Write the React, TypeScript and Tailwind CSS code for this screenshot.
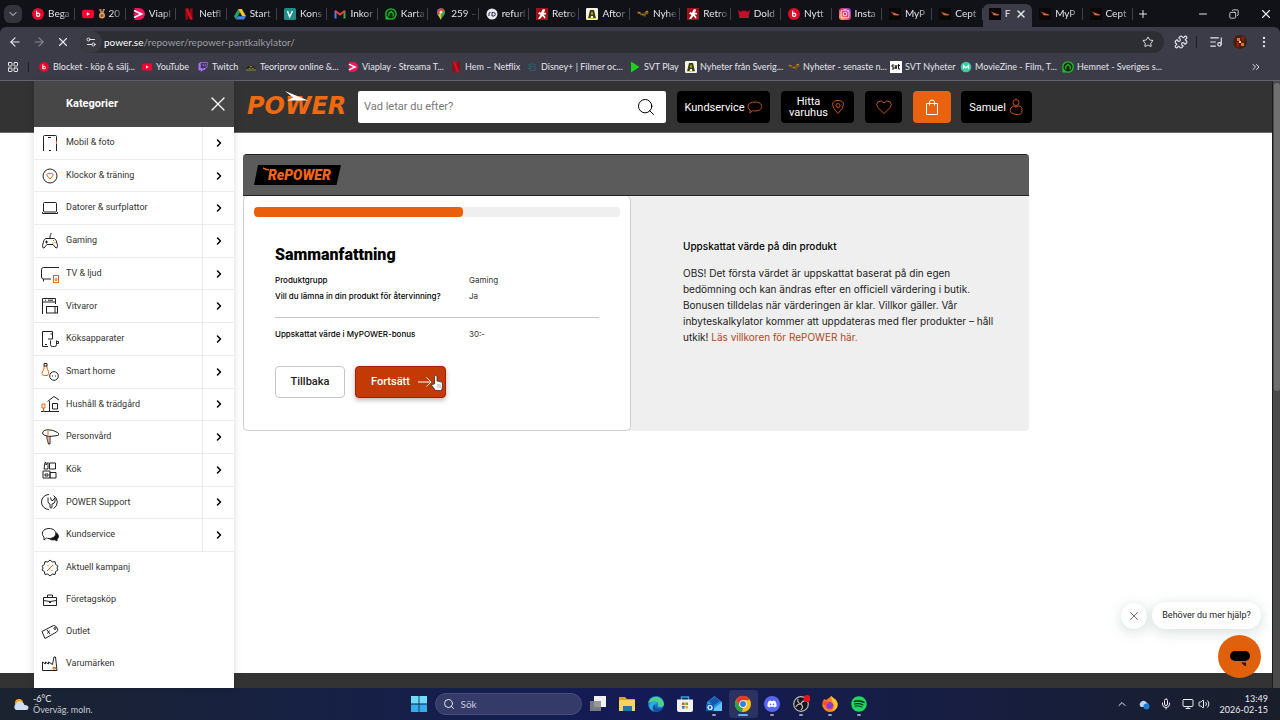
import React from 'react';
import {
  ArrowLeft, ArrowRight, ChevronDown, ChevronRight, ChevronUp, ChevronsRight, Copy, EllipsisVertical,
  ListMusic, Mic, Minus, Monitor, Plus, Puzzle, Search, Settings2, Star, Volume2, X, LayoutGrid,
} from 'lucide-react';
import { FaDiscord, FaInstagram, FaSpotify, FaTwitch } from 'react-icons/fa';

type IconProps = { className?: string };

const Blocket = ({ className = 'size-3' }: IconProps) => (
  <svg viewBox="0 0 12 12" className={className}>
    <circle cx="6" cy="6" r="6" fill="#e30b2c" />
    <path d="M4.6 2.8v5.6M4.6 6.8a1.6 1.6 0 1 0 3.2 0a1.6 1.6 0 1 0-3.2 0" fill="none" stroke="#fff" strokeWidth="1.2" />
  </svg>
);

const Youtube = ({ className = 'size-3' }: IconProps) => (
  <svg viewBox="0 0 12 12" className={className}>
    <rect y="1.8" width="12" height="8.4" rx="2.2" fill="#f00630" />
    <path d="M4.8 4.2v3.6L8 6z" fill="#fff" />
  </svg>
);

const Viaplay = ({ className = 'size-3' }: IconProps) => (
  <svg viewBox="0 0 12 12" className={className}>
    <path d="M1 0h5a6 6 0 0 1 0 12H1l2-3L0 6l3-3z" fill="#f0145a" />
    <path d="M1 2.5 8.5 6 1 9.5" fill="none" stroke="#fff" strokeWidth="1.8" />
  </svg>
);

const Netflix = ({ className = 'size-3' }: IconProps) => (
  <svg viewBox="0 0 12 12" className={className}>
    <path d="M2.5 0.5h2.6v11H2.5zM7 0.5h2.6v11H7z" fill="#9b0610" />
    <path d="M2.5 0.5h2.6l4.5 11H7z" fill="#d80f1c" />
  </svg>
);

const Drive = ({ className = 'size-3' }: IconProps) => (
  <svg viewBox="0 0 12 12" className={className}>
    <path d="M4.2 1 0 8.2l2 3.3L6.1 4.3z" fill="#1fa463" />
    <path d="M4.2 1h3.7L12 8.2H8.2z" fill="#fbc02d" />
    <path d="M4 8.2h8l-2 3.3H2z" fill="#4285f4" />
  </svg>
);

const Konsument = ({ className = 'size-3' }: IconProps) => (
  <svg viewBox="0 0 12 12" className={className}>
    <rect width="12" height="12" rx="1.5" fill="#1d8f86" />
    <path d="M3.5 3 5.6 9l2.9-6" fill="none" stroke="#fff" strokeWidth="1.4" />
  </svg>
);

const Gmail = ({ className = 'size-3' }: IconProps) => (
  <svg viewBox="0 0 12 12" className={className}>
    <path d="M1.5 10.5V3" stroke="#4285f4" strokeWidth="2" />
    <path d="M10.5 10.5V3" stroke="#34a853" strokeWidth="2" />
    <path d="M1 2.8 6 6.6l5-3.8" fill="none" stroke="#ea4335" strokeWidth="2" />
  </svg>
);

const Hemnet = ({ className = 'size-3' }: IconProps) => (
  <svg viewBox="0 0 12 12" className={className}>
    <circle cx="6" cy="6" r="5.2" fill="#0a2b0d" stroke="#22c12c" strokeWidth="1.3" />
    <path d="M3.8 8.5V5.3L6 3.5l2.2 1.8v3.2" fill="none" stroke="#22c12c" strokeWidth="1.2" />
    <path d="M0.5 8v3.5h3.5" fill="#22c12c" />
  </svg>
);

const MapPinLogo = () => (
  <svg viewBox="0 0 12 12" className="size-3">
    <path d="M6 12C5.5 9 2 7.5 2 4.2A4 4 0 0 1 6 .3z" fill="#4285f4" />
    <path d="M6 12c.5-3 4-4.5 4-7.8A4 4 0 0 0 6 .3z" fill="#34a853" />
    <path d="M2.8 6.8 9.5 2.5 8 .8 6 .3 2.5 2z" fill="#ea4335" />
    <path d="M3 7 6 4.5V12z" fill="#fbbc04" />
    <circle cx="6" cy="4.2" r="1.4" fill="#fff" />
  </svg>
);

const Refurbed = () => (
  <svg viewBox="0 0 12 12" className="size-3">
    <circle cx="6" cy="6" r="5.5" fill="#e9e9f0" />
    <path d="M3 8V5.5Q3 4.3 4.5 4.5M6 8V4.5h1.5a1.7 1.7 0 0 1 0 3.5z" fill="none" stroke="#22243a" strokeWidth="1" />
  </svg>
);

const Retro = () => (
  <svg viewBox="0 0 12 12" className="size-3">
    <rect width="12" height="12" fill="#a50e1b" />
    <path d="M6.5 1.5 8.5 1l.5 2L7.5 4.5 10 5v1.5H7.5L9.5 9 9 11 6.5 8 4 11H2l2.5-4L2 5.5 3.5 4l1.5.8z" fill="#fff" />
  </svg>
);

const Aftonbladet = ({ className = 'size-3' }: IconProps) => (
  <svg viewBox="0 0 12 12" className={className}>
    <rect width="12" height="12" rx="1.2" fill="#f4f4e8" />
    <path d="M2 10.5 4 2h4l2 8.5H7.3L7 8H5l-.5 2.5z" fill="#3c3d0d" />
    <path d="M5 6.5 6 3l1 3.5zM2 10h8v1H2z" fill="#d5d92a" />
  </svg>
);

const Expressen = ({ className = 'size-3' }: IconProps) => (
  <svg viewBox="0 0 12 12" className={className}>
    <path d="M0 4.5 1.5 3l1 1.5L4 4l.5 2 2-1L7 7l1-4 1 1 2-2v2l1-.5-1 2.5-2 .5-1 3-1-2-1 .5L5 7l-1.5.5L3 6 1 6z" fill="#7c5a1c" />
    <path d="M2 4.5h1M9 3.5h1.5M5.5 6.5h1" stroke="#e09a28" strokeWidth="1" />
  </svg>
);

const Crown = () => (
  <svg viewBox="0 0 12 12" className="size-3">
    <path d="M0.3 2 3 4l1.5-2L6 3.5 7.5 2 9 4l2.7-2-1 8H1.3z" fill="#c40d2b" />
  </svg>
);

const PowerIcon = () => (
  <svg viewBox="0 0 12 12" className="size-3">
    <rect width="12" height="12" fill="#0b0707" />
    <path d="M1.5 3.5 5.5 5l5 1.7-1 .8-4.5-.2-1.5-.8 1-.2z" fill="#d9683c" />
  </svg>
);

const InstagramIcon = () => (
  <span className="flex size-3 items-center justify-center rounded-[3px] bg-linear-to-tr from-[#fbad3c] via-[#e1306c] to-[#8134c8] text-white">
    <FaInstagram className="size-2.5" />
  </span>
);

const Medal = () => (
  <svg viewBox="0 0 8 10" className="h-2.5 w-2 shrink-0">
    <path d="M1 0h2l1 3 1-3h2L5.5 4h-3z" fill="#b98b62" />
    <circle cx="4" cy="6.5" r="3" fill="#e0a060" />
    <circle cx="4" cy="6.5" r="1.5" fill="#8d5a2c" />
  </svg>
);

const tabs: { icon: React.ReactNode; label: string; medal?: boolean; active?: boolean }[] = [
  { icon: <Blocket />, label: 'Bega' },
  { icon: <Youtube />, label: '20', medal: true },
  { icon: <Viaplay />, label: 'Viapl' },
  { icon: <Netflix />, label: 'Netfl' },
  { icon: <Drive />, label: 'Start' },
  { icon: <Konsument />, label: 'Kons' },
  { icon: <Gmail />, label: 'Inkor' },
  { icon: <Hemnet />, label: 'Karta' },
  { icon: <MapPinLogo />, label: '259 –' },
  { icon: <Refurbed />, label: 'refurl' },
  { icon: <Retro />, label: 'Retro' },
  { icon: <Aftonbladet />, label: 'Aftor' },
  { icon: <Expressen />, label: 'Nyhe' },
  { icon: <Retro />, label: 'Retro' },
  { icon: <Crown />, label: 'Dold' },
  { icon: <Blocket />, label: 'Nytt' },
  { icon: <InstagramIcon />, label: 'Insta' },
  { icon: <PowerIcon />, label: 'MyP' },
  { icon: <PowerIcon />, label: 'Cept' },
  { icon: <PowerIcon />, label: 'F', active: true },
  { icon: <PowerIcon />, label: 'MyP' },
  { icon: <PowerIcon />, label: 'Cept' },
];

const bookmarks = [
  { icon: <Blocket className="size-2.5" />, label: 'Blocket - köp & sälj...', width: 'w-[103px]' },
  { icon: <Youtube className="size-2.5" />, label: 'YouTube', width: 'w-[56px]' },
  { icon: <FaTwitch className="size-2.5 text-[#a970ff]" />, label: 'Twitch', width: 'w-[48px]' },
  {
    icon: (
      <svg viewBox="0 0 12 12" className="size-3">
        <path d="M1 8.5Q1.5 4.5 6 4.5T11 8.5z" fill="#2f3216" />
        <path d="M1 9h10M4 7.5h1.5M7 7.5h1.5M5 5.5h2" stroke="#8c8e2c" />
      </svg>
    ),
    label: 'Teoriprov online &...',
    width: 'w-[102px]',
  },
  { icon: <Viaplay className="size-2.5" />, label: 'Viaplay - Streama T...', width: 'w-[103px]' },
  { icon: <Netflix className="size-3" />, label: 'Hem – Netflix', width: 'w-[76px]' },
  {
    icon: (
      <svg viewBox="0 0 12 12" className="size-3">
        <path d="M2 4.5q4-3.5 8 0M4 4.5v5h3.5a2 2 0 0 0 0-4H3M2 7.5h4" fill="none" stroke="#2c5a68" strokeWidth="1.2" />
      </svg>
    ),
    label: 'Disney+ | Filmer oc...',
    width: 'w-[103px]',
  },
  {
    icon: (
      <svg viewBox="0 0 12 12" className="size-3">
        <path d="M2 0.5 10.5 6 2 11.5z" fill="#1fd11f" />
      </svg>
    ),
    label: 'SVT Play',
    width: 'w-[56px]',
  },
  { icon: <Aftonbladet className="size-3" />, label: 'Nyheter från Sverig...', width: 'w-[103px]' },
  { icon: <Expressen className="size-3" />, label: 'Nyheter - senaste n...', width: 'w-[102px]' },
  {
    icon: (
      <svg viewBox="0 0 12 12" className="size-3">
        <rect width="12" height="12" fill="#fff" />
        <path d="M4 4H2v2h2v2H2M5 4l1 4 1-4M8.5 3v5H10M8 4.5h2" fill="none" stroke="#111" />
      </svg>
    ),
    label: 'SVT Nyheter',
    width: 'w-[70px]',
  },
  {
    icon: (
      <svg viewBox="0 0 12 12" className="size-3">
        <circle cx="6" cy="6" r="5.3" fill="#3ecba0" />
        <path d="M3.5 8V4.5L6 7l2.5-2.5V8" fill="none" stroke="#e8fff8" strokeWidth="1.2" />
      </svg>
    ),
    label: 'MovieZine - Film, T...',
    width: 'w-[102px]',
  },
  { icon: <Hemnet className="size-3" />, label: 'Hemnet - Sveriges s...', width: 'w-[103px]' },
];

const orange = '#e8620f';

// Sidebar pictograms share one 18 x 18 grid and a thin black stroke.
const categories: { label: string; art: React.ReactNode }[] = [
  {
    label: 'Mobil & foto',
    art: <><path d="M2.5 17V2.5q0-1 1-1h11q1 0 1 1V17" /><path d="M7 3.5h3M8 16.5h2" /><path d="M15.5 7v3" stroke={orange} /></>,
  },
  {
    label: 'Klockor & träning',
    art: <><circle cx="9" cy="9" r="7" /><path d="M9 12 6.3 9a1.6 1.6 0 0 1 2.7-2 1.6 1.6 0 0 1 2.7 2z" stroke={orange} /></>,
  },
  {
    label: 'Datorer & surfplattor',
    art: <><rect x="2.5" y="3.5" width="13" height="9.5" rx="1" /><path d="M1.5 13v1.5h15V13" /></>,
  },
  {
    label: 'Gaming',
    art: <><path d="M4.5 6.5q-2 1-3 7 0 3 1.5 2.5l3-3.500h6l3 3.500q1.500.5 1.500-2.500-1-6-3-7zM9 6.500V4q0-1 1-1.500V1" /><path d="M5.500 8.500v3M4 10h3" /><path d="M12 8.500h1M13.500 10.500h1M11.500 11h1" stroke={orange} /></>,
  },
  {
    label: 'TV & ljud',
    art: <><path d="M18 2.500H2.500q-2 0-2 2v7.500q0 2 2 2H10M2.500 14v2.500" /><rect x="12.500" y="10.500" width="5" height="7" stroke={orange} /><circle cx="15" cy="14.500" r="1" stroke={orange} /></>,
  },
  {
    label: 'Vitvaror',
    art: <><path d="M1.500 17V1.500h13V7M1.500 5h13M4 3.200h1M7 3.200h5" /><rect x="5.500" y="9.500" width="11" height="6.500" /><path d="M14 9.500V16" /></>,
  },
  {
    label: 'Köksapparater',
    art: <><path d="M7 16.500H1.500V1.500h10V9H7M9.500 4H12" /><path d="M9.500 10.500v4q0 2 2 2h2q2 0 2-2v-4M15.500 11.500h2v2h-2M4 14.500h2" /></>,
  },
  {
    label: 'Smart home',
    art: <><path d="M3 3v2q0 1.500-1.500 3.500t1 4h4q2-2 1-4T6 5V3" stroke={orange} /><path d="M3 .5h3V3H3z" /><circle cx="13" cy="13" r="4.300" /><path d="M11 13h1M14 13h1" /></>,
  },
  {
    label: 'Hushåll & trädgård',
    art: <><path d="M0 16.500h18M6.500 6.500 13 1.500l5 3.500M8.500 6v10.500M11.500 8.500h5v5.500h-5z" /><path d="M1 9h3v4H1zM2.500 13v3.500" stroke={orange} /></>,
  },
  {
    label: 'Personvård',
    art: <><path d="M1.500 5Q2 2 7 1.800T16.500 4.500 13 8q-5 1-9-.5Q1.500 6.500 1.500 5z" /><path d="M6 8v2.500l1.500 5.500H9V8" /><path d="M7 3v4M7 8.500V14" stroke={orange} /></>,
  },
  {
    label: 'Kök',
    art: <path d="M3 8 4 1.500h1V4l2-2.500V8zM8.500 2h6v6h-6zM2 10h7v7H2zM9 11.500h6V17H9zM4 13h3v2H4z" />,
  },
  {
    label: 'POWER Support',
    art: <><path d="M8 1.500a7.500 7.500 0 0 0 0 15M12.500 2.500a7.500 7.500 0 0 1 0 13" /><path d="M7 4.500v4q0 2 2 2.500v3.500q1 1.500 2 0V11q3-.5 3-3V4.500l-2 3h-1.500l-1-3" /></>,
  },
  {
    label: 'Kundservice',
    art: <><path d="M14 6q4 2 3.500 5-.5 1.500-1.500 2v2l-2-1.200q-4 .7-6-1.300" fill="#111" /><path d="M8 2.500c9 0 9 10 0 10q-1.500 0-2.500-.5L3 14v-3C-.5 8 1.500 2.500 8 2.500z" fill="#fff" /></>,
  },
];

const shortcuts: { label: string; art: React.ReactNode }[] = [
  {
    label: 'Aktuell kampanj',
    art: <><path d="m9 1 2.200 1.900 2.900-.2.500 2.800L17 7.200 15.900 9l1.100 2-2.400 1.600-.5 2.800-2.900-.2L9 17l-2.200-1.900-2.900.2-.5-2.800L1 11l1.100-2L1 7.200l2.400-1.700.5-2.800 2.900.2z" /><path d="m6 12 6-6M6.500 6.500h1M10.500 11.500h1" stroke={orange} /></>,
  },
  {
    label: 'Företagsköp',
    art: <path d="M2.500 6.500h13v8h-13zM6.500 6.500V4h5v2.500M2.500 9.500q6.500 2 13 0M8 11.500h2" />,
  },
  {
    label: 'Outlet',
    art: <><path d="M1 8.500 12.500 2.500q2-.5 4 3 1 2-1 3.500L4 15.500z" /><circle cx="14" cy="5.500" r="1" /><path d="m6 7 3 4M6.500 10.500l2-3" /></>,
  },
  {
    label: 'Varumärken',
    art: <><path d="M1.500 15.500V7l3 2V7l3 2V7l4 2.500L13 2h1.500l1.500 13.500z" /><path d="M12 12.500h2.500V14H12z" stroke={orange} /></>,
  },
];

const Pictogram = ({ children }: { children: React.ReactNode }) => (
  <svg viewBox="0 0 18 18" className="size-[18px] shrink-0" fill="none" stroke="#222" strokeWidth="1">
    {children}
  </svg>
);

const BrowserChrome = () => (
  <div className="bg-[#111217] text-[#e4e4ea]">
    <div className="flex h-[27px] items-center">
      <button aria-label="Sök bland flikar" className="ml-1 flex size-[18px] items-center justify-center rounded-md bg-[#33343c]">
        <ChevronDown className="size-3" />
      </button>
      <div role="tablist" className="ml-[3px] flex h-full min-w-0 flex-1">
        {tabs.map((tab, i) =>
          tab.active ? (
            <div key={i} role="tab" aria-selected="true" className="mt-1 flex min-w-0 flex-1 items-center rounded-t-md bg-[#3c3c49] pb-1 pl-1.5">
              {tab.icon}
              <span className="ml-1 w-2 text-[10px]">{tab.label}</span>
              <button aria-label="Stäng flik" className="ml-0.5"><X className="size-3" strokeWidth={3} /></button>
            </div>
          ) : (
            <div key={i} role="tab" aria-selected="false" className="flex min-w-0 flex-1 items-center pl-[7px]">
              <span className="shrink-0">{tab.icon}</span>
              <span className="ml-1 flex flex-1 items-center gap-0.5 text-[10px] whitespace-nowrap [mask-image:linear-gradient(to_right,black_50%,transparent)]">
                {tab.medal && <Medal />}
                {tab.label}
              </span>
              <span className="h-3 w-px shrink-0 bg-[#3f4048]" />
            </div>
          ),
        )}
      </div>
      <div className="flex w-[147px] items-center pl-1">
        <button aria-label="Ny flik"><Plus className="size-3" /></button>
        <button aria-label="Minimera" className="ml-12"><Minus className="size-3" /></button>
        <button aria-label="Återställ" className="ml-5"><Copy className="size-2.5 -scale-x-100" /></button>
        <button aria-label="Stäng" className="ml-5"><X className="size-3.5" /></button>
      </div>
    </div>

    <div className="rounded-t-md border-b border-[#62656c] bg-[#3c3c49]">
      <div className="flex h-[30px] items-center pl-2">
        <button aria-label="Bakåt"><ArrowLeft className="size-3.5" /></button>
        <button aria-label="Framåt" className="ml-2.5 text-[#85858f]"><ArrowRight className="size-3.5" /></button>
        <button aria-label="Avbryt" className="ml-2.5"><X className="size-3.5" /></button>
        <div className="ml-2.5 flex h-[22px] min-w-0 flex-1 items-center rounded-full bg-[#2d2e33] pr-2.5">
          <span className="flex size-[22px] items-center justify-center rounded-full bg-[#3a3a42]">
            <Settings2 className="size-3" />
          </span>
          <span className="ml-0.5 flex-1 text-[10px] text-[#9d9da4]">
            <span className="text-white">power.se</span>/repower/repower-pantkalkylator/
          </span>
          <Star className="size-3" />
        </div>
        <div className="flex w-[116px] items-center pl-2.5">
          <Puzzle className="size-3.5" />
          <span className="ml-2 h-3 w-px bg-[#1e1e25]" />
          <ListMusic className="ml-3 size-3.5" />
          <svg viewBox="0 0 14 14" className="ml-2.5 size-3.5">
            <circle cx="7" cy="7" r="7" fill="#42210f" />
            <path d="M4 3h3v3H4zM8 8h3v3H8z" fill="#d8752a" />
            <path d="M3 7h3v5H4zM8 2h3v4H9z" fill="#a31515" />
            <path d="M6 6h2v2H6z" fill="#f5c98a" />
          </svg>
          <EllipsisVertical className="ml-2.5 size-3.5" />
        </div>
      </div>
      <div className="flex h-[23px] items-center pb-[3px] pl-[7px] text-[9px]">
        <LayoutGrid className="size-3" />
        <span className="mx-[9px] h-2.5 w-px bg-[#1e1e25]" />
        {bookmarks.map((b) => (
          <a key={b.label} href="#" className={`flex shrink-0 items-center gap-[3px] whitespace-nowrap ${b.width}`}>
            <span className="flex w-3 shrink-0 justify-center">{b.icon}</span>
            {b.label}
          </a>
        ))}
        <ChevronsRight className="mr-[18px] ml-auto size-3 shrink-0" />
      </div>
    </div>
  </div>
);

const PowerLogo = () => (
  <a href="#" aria-label="POWER" className="mr-2.5 block shrink-0">
    <svg viewBox="0 0 101 32" className="h-8 w-[101px]">
      <text x="0" y="23" fill="#ee6a10" fontFamily="DejaVu Sans" fontWeight="700" fontStyle="italic" fontSize="24">POWER</text>
      <path d="M38 0 61 9.5H40l6-3z" fill="#fff" />
    </svg>
  </a>
);

const HeaderButton = ({ className, children, label }: { className: string; children: React.ReactNode; label?: string }) => (
  <button aria-label={label} className={`flex h-8 shrink-0 items-center justify-center gap-0.5 rounded text-[11px] leading-[11px] text-white ${className}`}>
    {children}
  </button>
);

const SiteHeader = () => (
  <header className="h-[52px] border-b border-[#6a6a6a] bg-[#333] pt-2.5 pl-[247px]">
    <div className="flex max-w-[785px]">
      <PowerLogo />
      <form className="flex h-8 min-w-0 flex-1 items-center rounded-xs bg-white pr-2.5 pl-1.5">
        <input aria-label="Sök" placeholder="Vad letar du efter?" className="min-w-0 flex-1 text-[11px] outline-none placeholder:text-[#777]" />
        <button aria-label="Sök" type="button"><Search className="size-5 text-black" strokeWidth={1.2} /></button>
      </form>
      <HeaderButton className="ml-[11px] w-[93px] bg-black">
        Kundservice
        <svg viewBox="0 0 16 16" className="size-4" fill="none" stroke="#c8501a">
          <path d="M8 3c9 0 9 9 0 9q-1.500 0-2.500-.3L3 14v-3C-1 8 1 3 8 3z" />
        </svg>
      </HeaderButton>
      <HeaderButton className="ml-[11px] w-[73px] bg-black">
        <span>Hitta<br />varuhus</span>
        <svg viewBox="0 0 16 16" className="size-4" fill="none" stroke="#c8501a">
          <path d="M8 14.500Q2.500 9 2.500 5.500 2.500 1.500 8 1.500t5.500 4Q13.500 9 8 14.500z" />
          <circle cx="8" cy="6.500" r="2" />
        </svg>
      </HeaderButton>
      <HeaderButton label="Favoriter" className="ml-[11px] w-[37px] bg-black">
        <svg viewBox="0 0 16 16" className="size-4" fill="none" stroke="#c8501a">
          <path d="M8 14.500 1.800 8.500Q-.5 5 2 2.800 5.500.5 8 4q2.500-3.500 6-1.200Q16.500 5 14.200 8.500z" />
        </svg>
      </HeaderButton>
      <HeaderButton label="Varukorg" className="ml-[11px] w-[38px] bg-[#e8620f]">
        <svg viewBox="0 0 16 16" className="size-4" fill="none" stroke="#fff">
          <path d="M2.500 4.500h11v11h-11zM5.500 6.500V3q0-2 2.500-2t2.500 2v3.500" />
        </svg>
      </HeaderButton>
      <HeaderButton className="ml-2.5 w-[71px] bg-black">
        Samuel
        <svg viewBox="0 0 16 16" className="size-4" fill="none" stroke="#c8501a">
          <circle cx="8" cy="3.500" r="3" />
          <path d="M5.500 7Q2 8.500 2 11.500T8 15.500t6-4T10.500 7Q8 9 5.500 7z" />
        </svg>
      </HeaderButton>
    </div>
  </header>
);

const Sidebar = () => (
  <aside className="absolute inset-y-0 left-[34px] w-[200px] bg-white shadow-[0_0_8px_rgba(0,0,0,0.15)]">
    <div className="flex h-[46px] items-center justify-between bg-[#474747] pr-1 pl-8 text-white">
      <h2 className="text-[11px] font-bold">Kategorier</h2>
      <button aria-label="Stäng meny"><X className="size-6" strokeWidth={1.2} /></button>
    </div>
    <ul className="grid h-[425px] auto-rows-fr text-[9px] text-[#333]">
      {categories.map((c) => (
        <li key={c.label} className="flex border-b border-[#ebebeb]">
          <a href="#" className="flex flex-1 items-center gap-[7px] border-r border-[#ebebeb] pl-[7px]">
            <Pictogram>{c.art}</Pictogram>
            {c.label}
          </a>
          <button aria-label={`Visa ${c.label}`} className="flex w-[31px] items-center justify-center text-black">
            <ChevronRight className="size-3" strokeWidth={3} />
          </button>
        </li>
      ))}
    </ul>
    <ul className="text-[9px] text-[#333]">
      {shortcuts.map((s) => (
        <li key={s.label}>
          <a href="#" className="flex h-8 items-center gap-[7px] pl-[7px]">
            <Pictogram>{s.art}</Pictogram>
            {s.label}
          </a>
        </li>
      ))}
    </ul>
  </aside>
);

const HandCursor = () => (
  <svg viewBox="0 0 12 16" className="absolute top-2 right-0.5 h-4 w-3">
    <path d="M3.500 9V1.800q0-1.300 1.200-1.300T6 1.800V6l4 .8q1.500.4 1.500 2V12l-1 3.500H4.500L.8 10.500q0-1.500 1.500-1.300z" fill="#fff" stroke="#222" strokeWidth="0.7" />
    <path d="M7 9v4M9 9v4" stroke="#777" strokeWidth="0.6" />
  </svg>
);

const Calculator = () => (
  <main className="flex-1 bg-white pt-[21px] pl-[243px]">
    <div className="max-w-[786px]">
      <div className="flex h-[42px] items-center rounded-t border-y border-[#222] bg-[#5b5b5b] pl-[11px]">
        <svg viewBox="0 0 87 20" className="h-5 w-[87px]">
          <path d="M4 0h83l-4.500 20H0z" fill="#000" />
          <path d="m9 3 6 2-3-.3z" fill="#ee6a10" stroke="#ee6a10" />
          <text x="14" y="14.500" fill="#f0651a" fontFamily="Roboto" fontWeight="900" fontStyle="italic" fontSize="14">RePOWER</text>
        </svg>
      </div>
      <div className="flex rounded-b bg-[#efefef]">
        <section className="w-[388px] shrink-0 rounded-[5px] border border-t-0 border-[#ccc] bg-white px-2.5 pt-[11px] pb-8">
          <div role="progressbar" aria-label="Förlopp" aria-valuenow={57} className="h-2.5 rounded bg-[#efefef]">
            <div className="h-full w-[57%] rounded bg-[#e95f0b]" />
          </div>
          <div className="px-[21px]">
            <h1 className="mt-6 text-base leading-7 font-black text-black">Sammanfattning</h1>
            <dl className="grid grid-cols-[194px_1fr] pt-[3px] font-['Inter',sans-serif] text-[8px] leading-4 text-[#333]">
              <dt className="font-medium text-black">Produktgrupp</dt>
              <dd>Gaming</dd>
              <dt className="font-medium text-black">Vill du lämna in din produkt för återvinning?</dt>
              <dd>Ja</dd>
            </dl>
            <hr className="mt-[13px] mb-2 border-[#c4c4c4]" />
            <dl className="grid grid-cols-[194px_1fr] font-['Inter',sans-serif] text-[8px] leading-4 text-[#333]">
              <dt className="font-medium text-black">Uppskattat värde i MyPOWER-bonus</dt>
              <dd>30:-</dd>
            </dl>
            <div className="mt-6 flex gap-2.5 text-[11px] font-medium">
              <button className="h-8 w-[70px] rounded border border-[#c4c4c4] text-[#222]">Tillbaka</button>
              <button className="relative flex h-8 w-[91px] items-center rounded border border-[#a81e05] bg-[#c43a06] pl-[15px] text-white shadow-[0_2px_5px_rgba(0,0,0,0.3)]">
                Fortsätt
                <svg viewBox="0 0 14 12" className="ml-2 h-3 w-3.5" fill="none" stroke="#fff">
                  <path d="M0 6h13M8.500 1.500 13 6l-4.500 4.500" />
                </svg>
                <HandCursor />
              </button>
            </div>
          </div>
        </section>
        <section className="flex-1 pt-[42px] pr-8 pl-[52px] font-['Inter',sans-serif] text-[10px] leading-4 text-[#222]">
          <h2 className="pb-[11px] font-medium text-black">Uppskattat värde på din produkt</h2>
          <p>
            OBS! Det första värdet är uppskattat baserat på din egen<br />
            bedömning och kan ändras efter en officiell värdering i butik.<br />
            Bonusen tilldelas när värderingen är klar. Villkor gäller. Vår<br />
            inbyteskalkylator kommer att uppdateras med fler produkter – håll<br />
            utkik! <a href="#" className="text-[#b8441c]">Läs villkoren för RePOWER här.</a>
          </p>
        </section>
      </div>
    </div>
  </main>
);

const ChatWidget = () => (
  <div className="absolute right-[11px] bottom-2.5 flex flex-col items-end gap-1.5">
    <div className="flex items-center gap-[5px]">
      <button aria-label="Stäng" className="flex size-[26px] items-center justify-center rounded-full bg-white shadow-[0_3px_14px_rgba(60,110,100,0.22)]">
        <X className="size-3.5 text-[#333]" strokeWidth={1.2} />
      </button>
      <div className="flex h-[27px] w-[109px] items-center justify-center rounded-full bg-white text-[9px] whitespace-nowrap text-[#222] shadow-[0_3px_14px_rgba(60,110,100,0.22)]">
        Behöver du mer hjälp?
      </div>
    </div>
    <button aria-label="Öppna chatt" className="flex size-[43px] items-center justify-center rounded-full bg-[#e0600c]">
      <svg viewBox="0 0 22 18" className="h-[18px] w-[22px]">
        <rect x="1" y="3" width="20" height="10" rx="5" fill="#000" />
        <path d="M12 14.500h5V19z" fill="#2b0d00" />
      </svg>
    </button>
  </div>
);

const Scrollbar = () => (
  <div className="w-2 shrink-0 border-l border-[#1c1c1c] bg-[#4a4a4a]">
    <div className="mt-0.5 ml-px h-[308px] w-1.5 rounded-full bg-[#6f6f6f]" />
  </div>
);

const taskApps: { name: string; art: React.ReactNode; state?: 'open' | 'focused' }[] = [
  {
    name: 'Aktivitetsvy',
    art: <><path d="M5 1h12v11H5z" fill="#f0f0f0" /><path d="M1 6h11v10H1z" fill="#8a8a8a" opacity="0.85" /></>,
  },
  {
    name: 'Utforskaren',
    art: <><path d="M1 2h6l2 2h8v12H1z" fill="#d9a32c" /><path d="M1 5h16v11H1z" fill="#fbd25c" /><path d="M5 11h9v5H5z" fill="#1a78b8" /></>,
  },
  {
    name: 'Edge',
    art: <><circle cx="9" cy="9" r="8" fill="#1673c9" /><path d="M1.200 8A8 8 0 0 1 17 9q0 3-4 3-3-.5-2-2 1-3-3-3.500-4 0-6.800 1.500z" fill="#4fd08e" /><path d="M7 9q-1 5 4 6.500-6 2-8.500-3Q1 7 7 6.500 10 6.500 10 9q-1 1-3 0z" fill="#35b8e8" opacity="0.8" /><path d="M7.500 9.500q0 4 5 4.500l3-1q-3 5-8 3.500-4-3 0-7z" fill="#0f4fa0" /></>,
  },
  {
    name: 'Microsoft Store',
    art: <><path d="M5.500 5V2h7v3" fill="none" stroke="#3aa0e0" strokeWidth="1.5" /><path d="M1 4.500h16V15q0 2-2 2H3q-2 0-2-2z" fill="#f2f2ee" /><path d="M6 7.500h2.600v2.600H6z" fill="#e0552b" /><path d="M9.400 7.500H12v2.600H9.400z" fill="#6ca82e" /><path d="M6 11h2.600v2.600H6z" fill="#3a78c0" /><path d="M9.400 11H12v2.600H9.400z" fill="#e5b02a" /></>,
  },
  {
    name: 'Outlook',
    state: 'open',
    art: <><path d="M2 7 9.500 1 17 7v9H2z" fill="#2b8de0" /><path d="M4 6 10 2l5 4-7 5z" fill="#1757b0" /><path d="M17 7v9H6z" fill="#60c4f5" /><rect x="1" y="9" width="8" height="7" rx="1" fill="#1161b8" /><circle cx="5" cy="12.500" r="2" fill="none" stroke="#fff" strokeWidth="1.2" /></>,
  },
  {
    name: 'Chrome',
    state: 'focused',
    art: <><circle cx="9" cy="9" r="8" fill="#fbc116" /><path d="M2 5A8 8 0 0 1 16 5H9L5 10z" fill="#e33b2e" /><path d="M2 5 5.500 11l3.500 2-1 4A8 8 0 0 1 2 5z" fill="#2da14c" /><circle cx="9" cy="9" r="3.800" fill="#fff" /><circle cx="9" cy="9" r="3" fill="#3a7de8" /></>,
  },
  { name: 'Discord', state: 'open', art: <><circle cx="9" cy="9" r="8" fill="#5865f2" /><FaDiscord x="4" y="4" size={10} color="#fff" /></> },
  {
    name: 'OBS',
    state: 'open',
    art: <><circle cx="9" cy="9" r="7.300" fill="#17171c" stroke="#b9b9bf" strokeWidth="1.2" /><path d="M9 9Q5 8 6 4M9 9q1-4 5-3M9 9q3 3 0 6M9 9q-4 0-5 3" fill="none" stroke="#b9b9bf" strokeWidth="1.2" /><circle cx="15" cy="3.500" r="3.500" fill="#e8121c" /></>,
  },
  {
    name: 'Firefox',
    state: 'open',
    art: <><path d="M3 4 5 5l3-2 2-2 3 4 1-1.500Q18 8 16.500 12 14 17 9 17T1.300 11Q1 7 3 4z" fill="#ff7a24" /><path d="M10 1q5 3 6.500 8-1 7-6 7 3-2 3-6-3-3-3.500-9z" fill="#ffc83a" /><circle cx="8.500" cy="10.500" r="3.500" fill="#8a3ad0" /><path d="M3 6q3 0 5 2-3 1-2 3-3 0-4-3z" fill="#ff4b3a" /></>,
  },
  { name: 'Spotify', state: 'open', art: <><circle cx="9" cy="9" r="7" fill="#0c2a16" /><FaSpotify x="1" y="1" size={16} color="#1ed760" /></> },
];

const Taskbar = () => (
  <footer className="grid h-8 grid-cols-[1fr_auto_1fr] items-center bg-linear-to-r from-[#1b2330] via-[#141a56] to-[#1a1e2b] text-[9px] text-[#ececf2]">
    <div className="flex items-center gap-[3px] pl-3">
      <svg viewBox="0 0 18 16" className="h-4 w-[18px]">
        <circle cx="7" cy="7" r="4" fill="#f5a623" />
        <path d="M4 14a3.500 3.500 0 0 1 0-6q2-4 6-2 2 1 2.500 3 4 0 4 3 0 2-2.500 2z" fill="#cfdcf3" />
      </svg>
      <div className="leading-[11px]">
        <div>-6°C</div>
        <div className="text-[#c9cad2]">Överväg. moln.</div>
      </div>
    </div>
    <div className="ml-1 flex items-center">
      <button aria-label="Start" className="mr-2">
        <svg viewBox="0 0 16 16" className="size-4">
          <path d="M0 0h7.600v7.600H0zM8.400 0H16v7.600H8.400z" fill="#6fdcf8" />
          <path d="M0 8.400h7.600V16H0zM8.400 8.400H16V16H8.400z" fill="#34aeea" />
        </svg>
      </button>
      <label className="mr-0.5 flex h-[22px] w-[147px] items-center gap-1.5 rounded-full border border-[#484d7c] bg-[#343b68] pl-[7px]">
        <Search className="size-3" />
        <input aria-label="Sök" placeholder="Sök" className="w-24 text-[10px] outline-none placeholder:text-[#c9cbdd]" />
      </label>
      {taskApps.map((app) => (
        <button
          key={app.name}
          aria-label={app.name}
          className={`flex h-7 w-[29px] flex-col items-center rounded pt-[5px] ${app.state === 'focused' ? 'bg-white/10' : ''}`}
        >
          <svg viewBox="0 0 18 18" className="size-[18px] shrink-0">{app.art}</svg>
          {app.state === 'open' && <span className="mt-px h-0.5 w-1 rounded-full bg-[#9a9cb0]" />}
          {app.state === 'focused' && <span className="mt-px h-0.5 w-2.5 rounded-full bg-[#5fb4f0]" />}
        </button>
      ))}
    </div>
    <div className="flex items-center justify-end pr-3">
      <ChevronUp className="size-3" />
      <svg viewBox="0 0 12 12" className="ml-2.5 size-3">
        <path d="M3 9a3 3 0 0 1 0-5q3-3 6 1 2 .5 2 4z" fill="#b8d4ee" />
        <circle cx="8.500" cy="8.500" r="3" fill="#1c7cd4" />
      </svg>
      <Mic className="ml-2.5 size-3" />
      <Monitor className="ml-2.5 size-3" />
      <Volume2 className="ml-1 size-3" />
      <div className="ml-2.5 text-right leading-[11px]">
        <div>13:49</div>
        <div>2026-02-15</div>
      </div>
    </div>
  </footer>
);

export default function App() {
  return (
    <div className="flex min-h-screen flex-col overflow-hidden font-['Lato',sans-serif]">
      <BrowserChrome />
      <div className="flex flex-1 font-['Roboto',sans-serif]">
        <div className="relative flex min-w-0 flex-1 flex-col">
          <SiteHeader />
          <Calculator />
          <div className="h-[15px] bg-[#333]" />
          <Sidebar />
          <ChatWidget />
        </div>
        <Scrollbar />
      </div>
      <Taskbar />
    </div>
  );
}
